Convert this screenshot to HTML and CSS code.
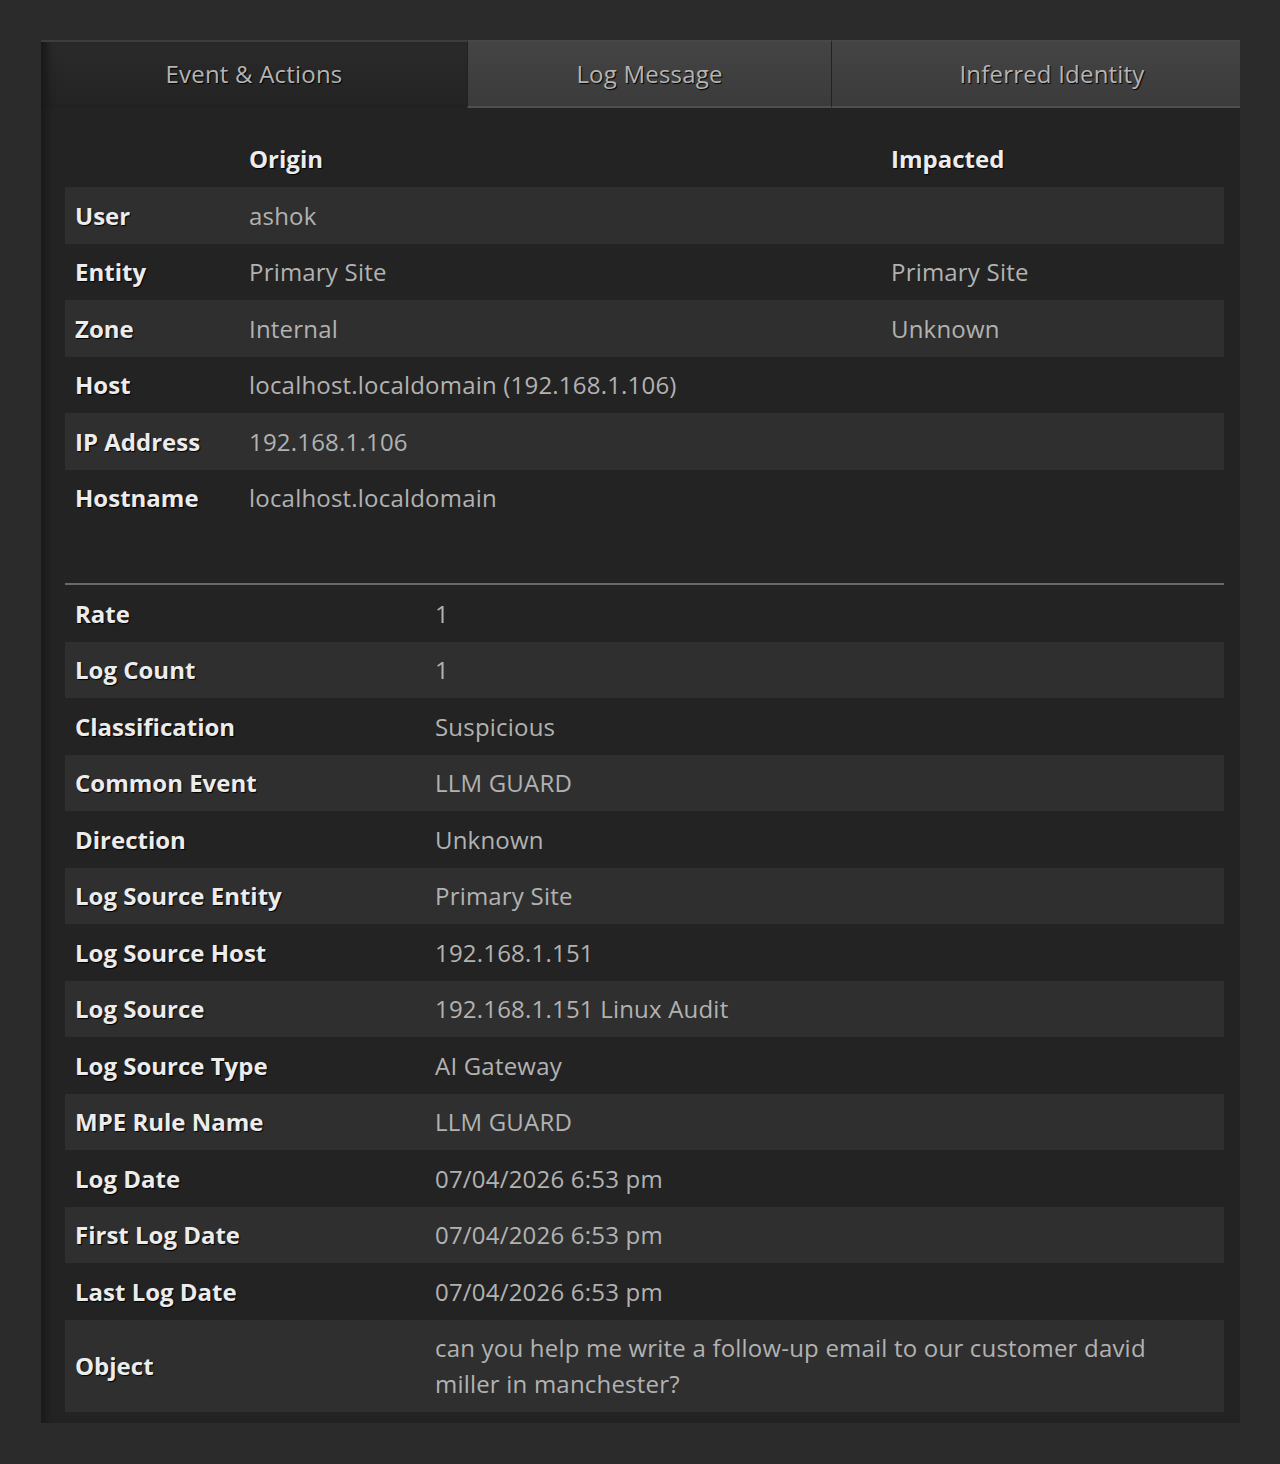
FILE: index.html
```html
<!DOCTYPE html>
<html>
<head>
<title>Event Details</title>
<link rel="stylesheet" href="styles.css">
</head>
<body>

<div class="panel">
  <div class="tabs">
    <div class="tab tab-active">Event &amp; Actions</div>
    <div class="tab tab-log">Log Message</div>
    <div class="tab tab-identity">Inferred Identity</div>
  </div>

  <div class="tab-body">
    <table class="detail-table origin-table">
      <tr class="head-row">
        <th></th>
        <th>Origin</th>
        <th>Impacted</th>
      </tr>
      <tr><td class="label">User</td><td>ashok</td><td></td></tr>
      <tr><td class="label">Entity</td><td>Primary Site</td><td>Primary Site</td></tr>
      <tr><td class="label">Zone</td><td>Internal</td><td>Unknown</td></tr>
      <tr><td class="label">Host</td><td>localhost.localdomain (192.168.1.106)</td><td></td></tr>
      <tr><td class="label">IP Address</td><td>192.168.1.106</td><td></td></tr>
      <tr><td class="label">Hostname</td><td>localhost.localdomain</td><td></td></tr>
    </table>

    <hr class="divider">

    <table class="detail-table info-table">
      <tr><td class="label">Rate</td><td>1</td></tr>
      <tr><td class="label">Log Count</td><td>1</td></tr>
      <tr><td class="label">Classification</td><td>Suspicious</td></tr>
      <tr><td class="label">Common Event</td><td>LLM GUARD</td></tr>
      <tr><td class="label">Direction</td><td>Unknown</td></tr>
      <tr><td class="label">Log Source Entity</td><td>Primary Site</td></tr>
      <tr><td class="label">Log Source Host</td><td>192.168.1.151</td></tr>
      <tr><td class="label">Log Source</td><td>192.168.1.151 Linux Audit</td></tr>
      <tr><td class="label">Log Source Type</td><td>AI Gateway</td></tr>
      <tr><td class="label">MPE Rule Name</td><td>LLM GUARD</td></tr>
      <tr><td class="label">Log Date</td><td>07/04/2026 6:53 pm</td></tr>
      <tr><td class="label">First Log Date</td><td>07/04/2026 6:53 pm</td></tr>
      <tr><td class="label">Last Log Date</td><td>07/04/2026 6:53 pm</td></tr>
      <tr><td class="label">Object</td><td>can you help me write a follow-up email to our customer david miller in manchester?</td></tr>
    </table>
  </div>
</div>

</body>
</html>
```

FILE: styles.css
```css
body {
  margin: 0;
  padding: 40px 40px 40px 41px;
  background-color: #2b2b2b;
  font-family: "Open Sans", "DejaVu Sans", sans-serif;
  font-size: 24px;
  letter-spacing: 0.2px;
  color: #b2b2b2;
}

.panel {
  width: 1199px;
  background-color: #232323;
  box-shadow: inset 10px 0 6px -4px #1b1b1b;
}

.tabs {
  display: grid;
  grid-template-columns: 426px 364px 1fr;
  height: 68px;
}

.tab {
  display: flex;
  align-items: center;
  justify-content: center;
  padding-bottom: 4px;
  color: #b4b4b4;
  text-shadow: 1px 1px 1px #000;
  border-top: 2px solid #3d3d3d;
}

.tab-active {
  background: linear-gradient(to bottom, #2a2a2a, #232323);
  box-shadow: inset 12px 0 8px -6px #181818;
}

.tab-log,
.tab-identity {
  padding-bottom: 2px;
  background: linear-gradient(to bottom, #444, #3b3b3b);
  border-top-color: #484848;
  border-left: 1px solid #222;
  border-bottom: 2px solid #4f4f4f;
}

.tab-identity {
  padding-left: 32px;
}

.tab-body {
  padding: 27px 16px 11px 24px;
}

.detail-table {
  width: 100%;
  table-layout: fixed;
  border-collapse: collapse;
  border-spacing: 0;
}

.detail-table td,
.detail-table th {
  padding: 10.25px 10px;
  line-height: 36px;
  text-align: left;
  vertical-align: middle;
}

.detail-table th {
  color: #ececec;
  font-weight: 700;
  letter-spacing: 0;
  text-shadow: 1px 1px 1px #000;
  padding-top: 6px;
}

.detail-table td.label {
  color: #ececec;
  font-weight: 700;
  letter-spacing: 0;
  text-shadow: 1px 1px 1px #000;
}

.origin-table th:first-child {
  width: 154px;
}

.origin-table th:nth-child(2) {
  width: 622px;
}

.info-table td:first-child {
  width: 340px;
}

.origin-table tr:nth-child(even),
.info-table tr:nth-child(even) {
  background-color: #2f2f2f;
}

.divider {
  margin: 57px 0 0 0;
  border: 0;
  border-top: 2px solid #6a6a6a;
}
```
